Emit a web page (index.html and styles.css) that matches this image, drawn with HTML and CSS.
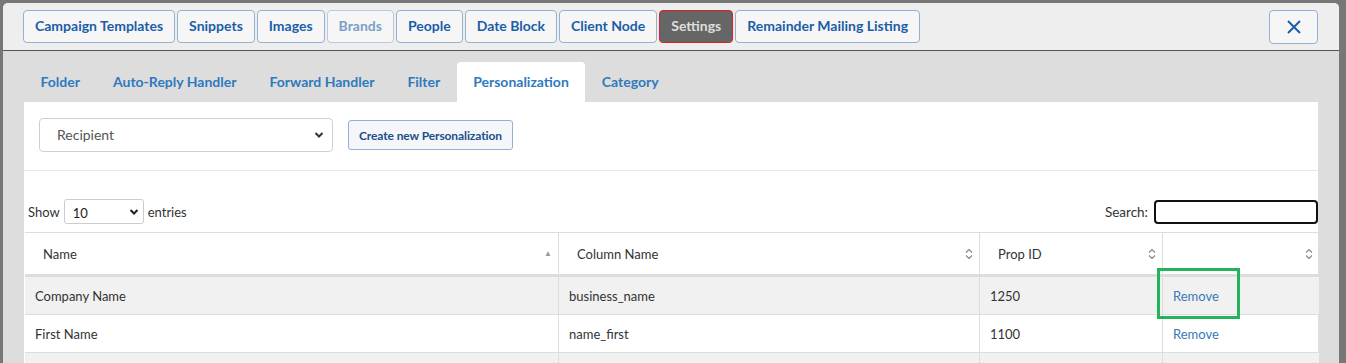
FILE: index.html
```html
<!DOCTYPE html>
<html lang="en">
<head>
    <meta charset="UTF-8">
    <meta name="viewport" content="width=device-width, initial-scale=1.0">
    <title>Settings - Personalization</title>
    <link rel="stylesheet" href="styles.css">
</head>
<body>
    <div class="modal">
        <div class="modal-header">
            <div class="nav-buttons">
                <button class="nav-btn">Campaign Templates</button>
                <button class="nav-btn">Snippets</button>
                <button class="nav-btn">Images</button>
                <button class="nav-btn disabled">Brands</button>
                <button class="nav-btn">People</button>
                <button class="nav-btn">Date Block</button>
                <button class="nav-btn">Client Node</button>
                <button class="nav-btn active">Settings</button>
                <button class="nav-btn">Remainder Mailing Listing</button>
            </div>
            <button class="close-btn" aria-label="Close">
                <svg width="16" height="16" viewBox="0 0 16 16"><path d="M2 2L14 14M14 2L2 14" stroke="#1b5ea8" stroke-width="2" fill="none"/></svg>
            </button>
        </div>

        <div class="modal-body">
            <ul class="tabs">
                <li class="tab">Folder</li>
                <li class="tab">Auto-Reply Handler</li>
                <li class="tab">Forward Handler</li>
                <li class="tab">Filter</li>
                <li class="tab active">Personalization</li>
                <li class="tab">Category</li>
            </ul>

            <div class="panel">
                <div class="toolbar">
                    <div class="select-wrap big">
                        <select class="form-select">
                            <option>Recipient</option>
                        </select>
                        <svg class="chevron" width="10" height="8" viewBox="0 0 10 8"><path d="M1.5 2L5 5.5L8.5 2" stroke="#333" stroke-width="2" fill="none"/></svg>
                    </div>
                    <button class="create-btn">Create new Personalization</button>
                </div>

                <div class="dt-controls">
                    <label class="dt-length">Show
                        <span class="select-wrap small">
                            <select class="len-select"><option>10</option></select>
                            <svg class="chevron" width="10" height="8" viewBox="0 0 10 8"><path d="M1.5 2L5 5.5L8.5 2" stroke="#222" stroke-width="2" fill="none"/></svg>
                        </span>
                        entries</label>
                    <label class="dt-search">Search: <input type="text" class="search-input"></label>
                </div>

                <table class="dt-table">
                    <thead>
                        <tr>
                            <th class="col-name">Name <span class="sort asc">&#9650;</span></th>
                            <th class="col-column">Column Name <svg class="sort both" width="8" height="12" viewBox="0 0 8 12"><path d="M1 4.5L4 1.5L7 4.5M1 7.5L4 10.5L7 7.5" stroke="#888" stroke-width="1.2" fill="none"/></svg></th>
                            <th class="col-prop">Prop ID <svg class="sort both" width="8" height="12" viewBox="0 0 8 12"><path d="M1 4.5L4 1.5L7 4.5M1 7.5L4 10.5L7 7.5" stroke="#888" stroke-width="1.2" fill="none"/></svg></th>
                            <th class="col-action"><svg class="sort both" width="8" height="12" viewBox="0 0 8 12"><path d="M1 4.5L4 1.5L7 4.5M1 7.5L4 10.5L7 7.5" stroke="#888" stroke-width="1.2" fill="none"/></svg></th>
                        </tr>
                    </thead>
                    <tbody>
                        <tr class="odd">
                            <td>Company Name</td>
                            <td>business_name</td>
                            <td>1250</td>
                            <td class="action-cell"><a href="#" class="remove-link">Remove</a><span class="highlight-box"></span></td>
                        </tr>
                        <tr class="even">
                            <td>First Name</td>
                            <td>name_first</td>
                            <td>1100</td>
                            <td class="action-cell"><a href="#" class="remove-link">Remove</a></td>
                        </tr>
                        <tr class="odd">
                            <td></td>
                            <td></td>
                            <td></td>
                            <td class="action-cell"></td>
                        </tr>
                    </tbody>
                </table>
            </div>
        </div>
    </div>
</body>
</html>
```

FILE: styles.css
```css
body, html {
    margin: 0;
    height: 100%;
    overflow: hidden;
}
body {
    background: #777777;
    font-family: 'Lato', 'Noto Sans', sans-serif;
    padding: 3px 0 0 3px;
    box-sizing: border-box;
}
.modal {
    width: 1336px;
    height: 400px;
    background: #dddddd;
    border-radius: 5px 5px 0 0;
    overflow: hidden;
}
.modal-header {
    display: flex;
    justify-content: space-between;
    align-items: flex-start;
    background: #eeeeee;
    padding: 7px 21px 6px 20px;
    border-bottom: 1px solid #555555;
}
.nav-buttons {
    display: flex;
    gap: 2px;
}
.nav-btn {
    height: 33px;
    padding: 0 11px 2px;
    background: #f6f6f6;
    border: 1px solid #93b1d2;
    border-radius: 4px;
    color: #1b5ea8;
    font-family: inherit;
    font-size: 14px;
    font-weight: 700;
    cursor: pointer;
}
.nav-btn.disabled {
    color: #7a9fc8;
    border-color: #b6cbe1;
}
.nav-btn.active {
    background: #666666;
    border-color: #e0201f;
    color: #dedede;
}
.close-btn {
    width: 49px;
    height: 34px;
    display: flex;
    align-items: center;
    justify-content: center;
    background: #f6f6f6;
    border: 1px solid #93b1d2;
    border-radius: 4px;
    padding: 0;
    cursor: pointer;
}
.modal-body {
    padding: 11px 21px 0;
}
.tabs {
    display: flex;
    list-style: none;
    margin: 0;
    padding: 0;
    height: 40px;
}
.tab {
    padding: 0 16.5px;
    line-height: 39px;
    color: #2e7abd;
    font-size: 14px;
    font-weight: 700;
    border-radius: 4px 4px 0 0;
}
.tab.active {
    background: #ffffff;
}
.panel {
    background: #ffffff;
    height: 300px;
}
.toolbar {
    display: flex;
    align-items: center;
    gap: 15px;
    padding: 16px 15px 18px;
    border-bottom: 1px solid #e8e8e8;
}
.select-wrap {
    position: relative;
    display: inline-block;
}
.select-wrap .chevron {
    position: absolute;
    top: 50%;
    margin-top: -4px;
    pointer-events: none;
}
.select-wrap.big .chevron { right: 9px; }
.select-wrap.small .chevron { right: 5px; }
.form-select {
    appearance: none;
    width: 294px;
    height: 34px;
    padding: 0 17px 2px;
    border: 1px solid #cfcfcf;
    border-radius: 4px;
    background: #ffffff;
    color: #555555;
    font-family: inherit;
    font-size: 14px;
    display: block;
}
.create-btn {
    height: 30px;
    padding: 0 10px;
    background: #f4f6f9;
    border: 1px solid #93b1d2;
    border-radius: 3px;
    color: #1b4f8a;
    font-family: inherit;
    font-size: 12px;
    font-weight: 700;
    letter-spacing: -0.1px;
}
.dt-controls {
    display: flex;
    justify-content: space-between;
    align-items: center;
    padding: 28px 0 8px 4px;
    font-size: 13px;
    color: #333333;
}
.dt-length {
    display: flex;
    align-items: center;
    gap: 4px;
}
.len-select {
    appearance: none;
    width: 80px;
    height: 25px;
    padding: 2px 8px 0;
    border: 1px solid #cccccc;
    border-radius: 3px;
    background: #ffffff;
    color: #222222;
    font-family: inherit;
    font-size: 13px;
    display: block;
}
.dt-search {
    display: flex;
    align-items: center;
    gap: 6px;
    font-size: 13.5px;
}
.search-input {
    width: 160px;
    height: 20px;
    border: 2px solid #111111;
    border-radius: 4px;
    padding: 0;
    margin: 0;
}
.dt-table {
    width: 1294px;
    border-collapse: collapse;
    font-size: 13px;
    color: #333333;
    margin-left: 1px;
}
.dt-table th {
    position: relative;
    height: 41px;
    padding: 0 18px;
    text-align: left;
    font-weight: 400;
    border-top: 1px solid #dddddd;
    border-bottom: 3px solid #dddddd;
    border-left: 1px solid #dddddd;
}
.dt-table th:first-child,
.dt-table td:first-child {
    border-left: none;
}
.col-name { width: 497px; }
.col-column { width: 384px; }
.col-prop { width: 146px; }
.sort {
    position: absolute;
    right: 6px;
    top: 50%;
}
.sort.asc {
    font-size: 8px;
    color: #999999;
    margin-top: -6px;
    right: 6px;
}
.sort.both {
    margin-top: -6px;
}
.dt-table td {
    height: 37px;
    padding: 0 10px;
    border-left: 1px solid #dddddd;
    border-bottom: 1px solid #dddddd;
}
.dt-table tr.odd td {
    background: #f1f1f1;
}
.action-cell {
    position: relative;
}
.remove-link {
    color: #3a78b8;
    text-decoration: none;
}
.highlight-box {
    position: absolute;
    left: -6px;
    top: -9px;
    width: 77px;
    height: 45px;
    border: 3px solid #22b35c;
}
```
